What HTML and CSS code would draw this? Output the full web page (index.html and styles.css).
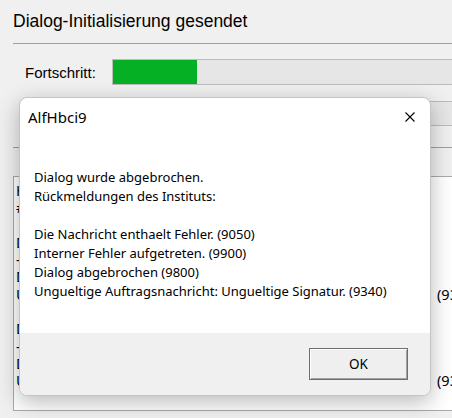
FILE: index.html
```html
<!DOCTYPE html>
<html lang="de">
<head>
    <meta charset="UTF-8">
    <title>Dialog-Initialisierung gesendet</title>
    <link rel="stylesheet" href="styles.css">
</head>
<body>

<div class="window">
    <h1 class="heading">Dialog-Initialisierung gesendet</h1>
    <div class="rule"></div>

    <div class="progress-row">
        <span class="progress-label">Fortschritt:</span>
        <div class="progress-bar"><div class="progress-fill" style="width: 84px"></div></div>
    </div>
    <div class="progress-row second">
        <span class="progress-label">Auftrag:</span>
        <div class="progress-bar"><div class="progress-fill" style="width: 0"></div></div>
    </div>

    <div class="rule lower"></div>

    <div class="log">
        <div class="log-line"><span>HKIDN: Dialog-Initialisierung wird gesendet</span><span></span></div>
        <div class="log-line"><span>#1 Nachricht an Institut uebertragen</span><span></span></div>
        <div class="log-line"><span>&nbsp;</span><span></span></div>
        <div class="log-line"><span>Dialog wurde abgebrochen.</span><span></span></div>
        <div class="log-line"><span>-----------------------------</span><span></span></div>
        <div class="log-line"><span>Die Nachricht enthaelt Fehler.</span><span></span></div>
        <div class="log-line"><span>Ungueltige Auftragsnachricht: Ungueltige Signatur.</span><span>(9340)</span></div>
        <div class="log-line"><span>&nbsp;</span><span></span></div>
        <div class="log-line"><span>Dialog wurde abgebrochen.</span><span></span></div>
        <div class="log-line"><span>-----------------------------</span><span></span></div>
        <div class="log-line"><span>Dialog abgebrochen</span><span></span></div>
        <div class="log-line"><span>Ungueltige Auftragsnachricht: Ungueltige Signatur.</span><span>(9340)</span></div>
    </div>
</div>

<!-- Message box shown over the main window -->
<div class="dialog">
    <div class="dialog-title">
        <span>AlfHbci9</span>
        <svg class="close-icon" width="10" height="10" viewBox="0 0 10 10">
            <path d="M0.5 0.5 L9.5 9.5 M9.5 0.5 L0.5 9.5" stroke="#000" stroke-width="1.1" fill="none"/>
        </svg>
    </div>
    <div class="dialog-body">
        <p class="message">Dialog wurde abgebrochen.<br>
Rückmeldungen des Instituts:<br>
<br>
Die Nachricht enthaelt Fehler. (9050)<br>
Interner Fehler aufgetreten. (9900)<br>
Dialog abgebrochen (9800)<br>
Ungueltige Auftragsnachricht: Ungueltige Signatur. (9340)</p>
    </div>
    <div class="dialog-footer">
        <button class="ok-btn">OK</button>
    </div>
</div>

</body>
</html>
```

FILE: styles.css
```css
body {
    margin: 0;
    height: 418px;
    overflow: hidden;
    background-color: #f0f0f0;
    font-family: "Liberation Sans", Arial, sans-serif;
    color: #000;
}

.window {
    width: 480px;
    padding-left: 13px;
}

.heading {
    margin: 11px 0 0;
    font-size: 17.5px;
    font-weight: normal;
    line-height: 20px;
}

.rule {
    height: 1px;
    margin-top: 12px;
    background-color: #a0a0a0;
}

.rule.lower {
    margin-top: 21px;
}

.progress-row {
    display: flex;
    align-items: center;
    margin-top: 15px;
}

.progress-row.second {
    margin-top: 16px;
}

.progress-label {
    width: 99px;
    flex-shrink: 0;
    padding-left: 12px;
    box-sizing: border-box;
    font-size: 15px;
}

.progress-bar {
    flex: 1;
    height: 26px;
    box-sizing: border-box;
    border: 1px solid #bcbcbc;
    background-color: #e6e6e6;
}

.second .progress-bar {
    height: 25px;
}

.progress-fill {
    height: 100%;
    background-color: #06b025;
}

.log {
    height: 235px;
    margin-top: 28px;
    box-sizing: border-box;
    padding: 5px 0 0 2px;
    border: 1px solid #a9a9a9;
    background-color: #fff;
    font-family: "Noto Sans", sans-serif;
    font-size: 14.5px;
    line-height: 17.3px;
}

.log-line {
    display: grid;
    grid-template-columns: 421px auto;
    white-space: nowrap;
}

.dialog {
    position: absolute;
    left: 19px;
    top: 97px;
    width: 412px;
    height: 299px;
    box-sizing: border-box;
    display: flex;
    flex-direction: column;
    border: 1px solid #c4c4c4;
    border-radius: 8px;
    background-color: #fff;
    box-shadow: 0 6px 22px rgba(0, 0, 0, 0.28);
    font-family: "Noto Sans", sans-serif;
    overflow: hidden;
}

.dialog-title {
    display: flex;
    align-items: center;
    justify-content: space-between;
    height: 38px;
    padding: 0 15px 0 8px;
    font-size: 15px;
}

.dialog-body {
    flex: 1;
    padding: 32px 14px 0;
}

.message {
    margin: 0;
    font-size: 13px;
    line-height: 19px;
}

.dialog-footer {
    display: flex;
    justify-content: flex-end;
    align-items: flex-start;
    height: 62px;
    box-sizing: border-box;
    padding: 15px 22px 0 0;
    background-color: #f0f0f0;
}

.ok-btn {
    width: 99px;
    height: 32px;
    border: 1px solid #6e6e6e;
    background-color: #efefef;
    box-shadow: inset 1px 1px 0 #fff, inset -1px -1px 0 #a0a0a0;
    font-family: "Noto Sans", sans-serif;
    font-size: 13.5px;
    color: #000;
    cursor: pointer;
}
```
